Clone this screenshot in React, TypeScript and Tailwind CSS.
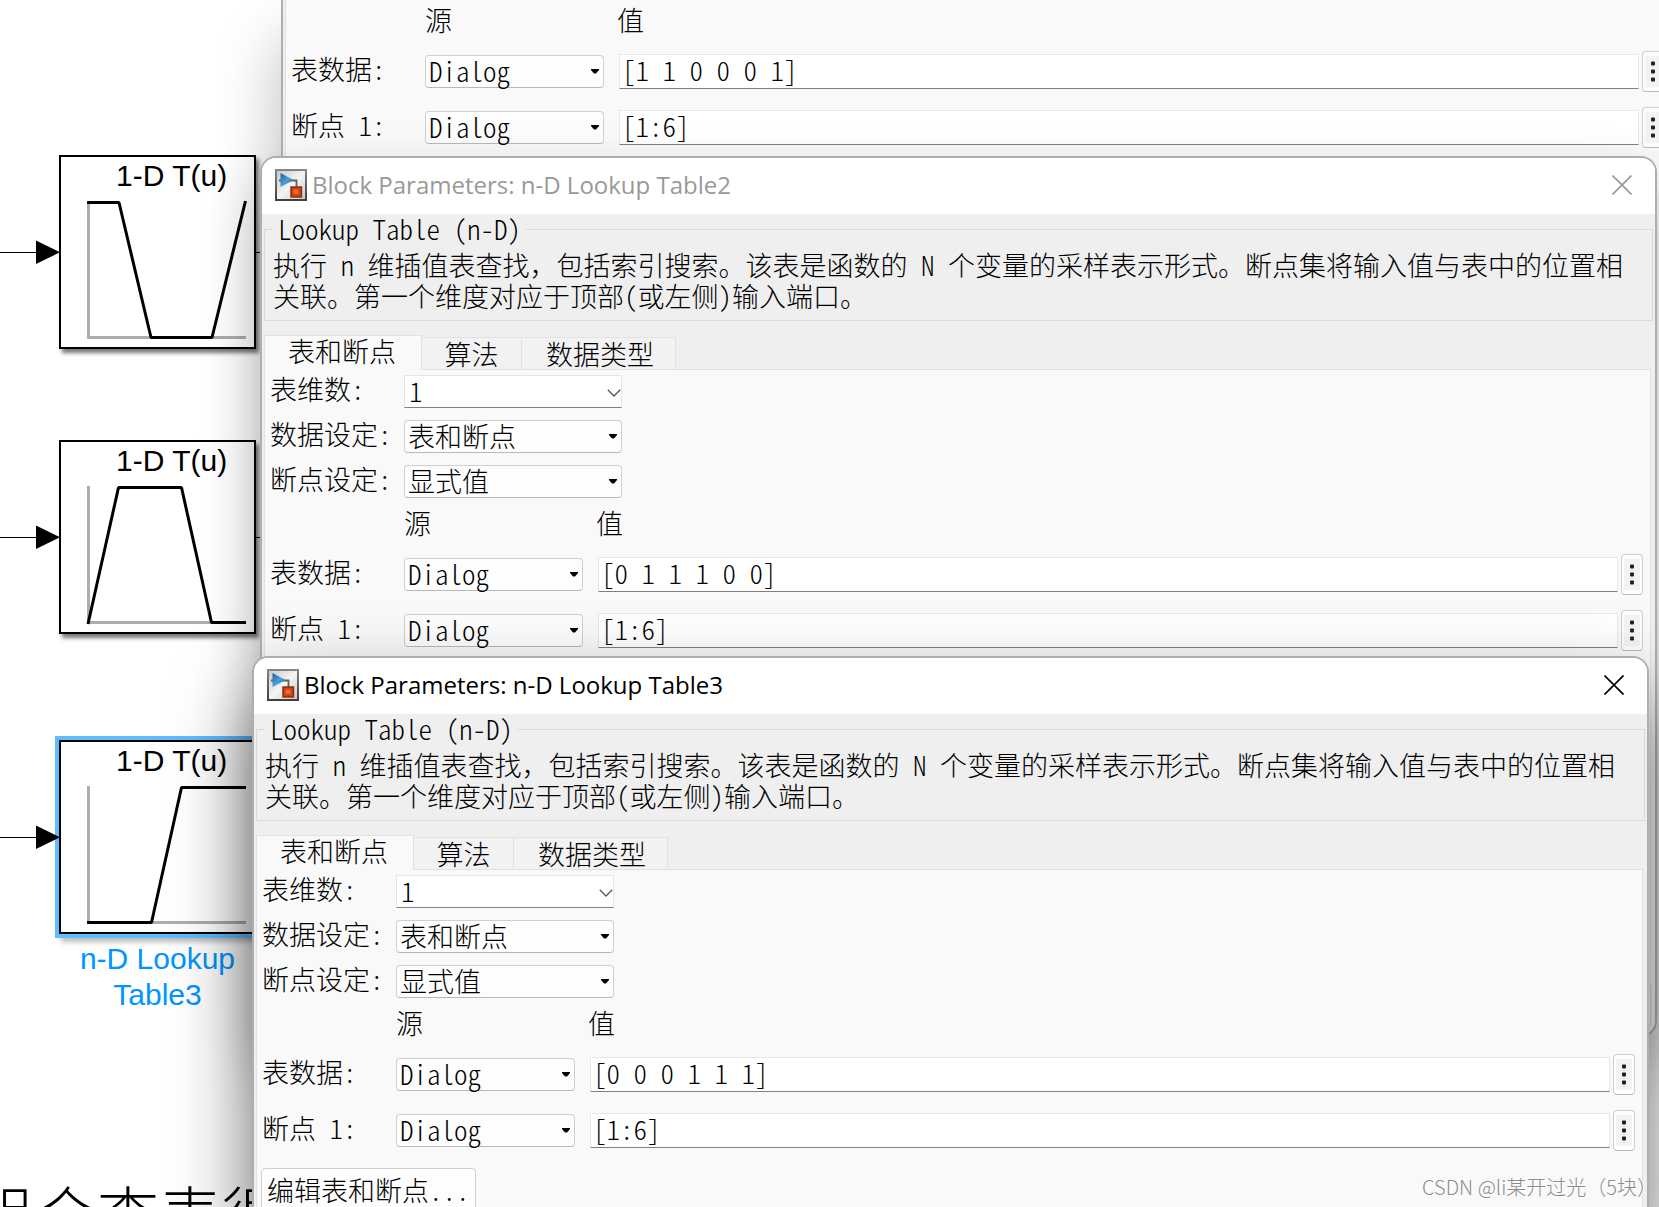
import React, { useId } from "react";

const FORM =
  "font-['Noto_Sans_CJK_SC',sans-serif] text-[27px] font-light [font-feature-settings:'hwid']";

function ModelIcon() {
  return (
    <svg viewBox="0 0 32 32" className="size-8 shrink-0" aria-hidden="true">
      <defs>
        <linearGradient id="iconBg" x1="0" y1="0" x2="1" y2="1">
          <stop offset="0" stopColor="#c4c6c8" />
          <stop offset="0.5" stopColor="#f4f4f4" />
          <stop offset="1" stopColor="#c6c8ca" />
        </linearGradient>
        <linearGradient id="iconEdge" x1="0" y1="0" x2="0" y2="1">
          <stop offset="0" stopColor="#858585" />
          <stop offset="1" stopColor="#3f3f3f" />
        </linearGradient>
        <linearGradient id="iconBlue" x1="0" y1="0" x2="1" y2="1">
          <stop offset="0" stopColor="#1d5f97" />
          <stop offset="0.5" stopColor="#4a9fd6" />
          <stop offset="1" stopColor="#1c669f" />
        </linearGradient>
      </defs>
      <rect x="1" y="1" width="30" height="30" fill="url(#iconBg)" stroke="url(#iconEdge)" strokeWidth="2" />
      <path d="M4 11.5h17.5V19" fill="none" stroke="#5d6266" strokeWidth="1.8" />
      <path d="M5.5 4 18.5 11 5.5 18z" fill="url(#iconBlue)" />
      <rect x="16" y="18" width="10.5" height="10" fill="#cf430f" stroke="#8a2b08" strokeWidth="1.4" />
      <rect x="18.5" y="20.5" width="5" height="4.5" fill="#ee6a34" />
    </svg>
  );
}

function Dropdown({ label, id, value }: { label?: string; id?: string; value: string }) {
  return (
    <div className="relative flex h-[33px] items-center rounded border border-[#d0d0d0] border-b-[#b8b8b8] bg-[#fdfdfd]">
      <select
        id={id}
        aria-label={label}
        className={`${FORM} h-[42px] w-full shrink-0 appearance-none bg-transparent pb-0.5 pl-[3px] text-black outline-none`}
      >
        <option>{value}</option>
      </select>
      <svg viewBox="0 0 8 5" className="pointer-events-none absolute top-[13px] right-1 h-[5px] w-2" aria-hidden="true">
        <path d="M0 0h8v1L5 4.5H3L0 1z" fill="#000" />
      </svg>
    </div>
  );
}

function Combo({ id, value }: { id: string; value: string }) {
  return (
    <div className="relative flex h-[33px] items-center border border-[#e6e6e6] border-b-[#808080] bg-white">
      <select
        id={id}
        className={`${FORM} h-[42px] w-full shrink-0 appearance-none bg-transparent pb-0.5 pl-1 text-black outline-none`}
      >
        <option>{value}</option>
      </select>
      <svg viewBox="0 0 14 8" className="pointer-events-none absolute top-[13px] right-0 h-2 w-[14px]" aria-hidden="true">
        <path d="M0.8 0.8 7 7 13.2 0.8" fill="none" stroke="#555" strokeWidth="1.3" />
      </svg>
    </div>
  );
}

function FieldLabel({ htmlFor, text }: { htmlFor: string; text: string }) {
  return (
    <label htmlFor={htmlFor} className={`${FORM} block pb-1.5 leading-[27px] whitespace-nowrap`}>
      {text}
    </label>
  );
}

function SettingRow({ label, children }: { label: string; children: (id: string) => React.ReactNode }) {
  const id = useId();
  return (
    <div className="grid grid-cols-[134px_218px] items-center">
      <FieldLabel htmlFor={id} text={label} />
      {children(id)}
    </div>
  );
}

function DataRow({ label, value }: { label: string; value: string }) {
  const id = useId();
  return (
    <div className="grid grid-cols-[134px_179px_1fr_22px] items-center">
      <FieldLabel htmlFor={id} text={label} />
      <Dropdown label={label} value="Dialog" />
      <input
        id={id}
        defaultValue={value}
        className={`${FORM} mr-[3px] ml-[15px] h-[35px] min-w-0 border border-[#e8e8e8] border-b-[#808080] bg-white pb-0.5 pl-0.5 text-black outline-none`}
      />
      <button
        type="button"
        aria-label="更多操作"
        className="flex h-[41px] items-center justify-center rounded border border-[#cfcfcf] border-b-[#bbb] bg-[#fdfdfd]"
      >
        <svg viewBox="0 0 16 31" className="h-[31px] w-4" aria-hidden="true">
          <rect width="16" height="31" fill="#f3f3f3" />
          <rect x="6" y="5.5" width="4" height="4" rx="1" fill="#222" />
          <rect x="6" y="13.5" width="4" height="4" rx="1" fill="#222" />
          <rect x="6" y="21.5" width="4" height="4" rx="1" fill="#222" />
        </svg>
      </button>
    </div>
  );
}

function DataTable({ data }: { data: string }) {
  return (
    <div className="flex flex-col gap-[15px]">
      <div className={`${FORM} grid grid-cols-[134px_179px_1fr] pb-1 leading-[25px]`}>
        <span />
        <span>源</span>
        <span className="pl-[13px]">值</span>
      </div>
      <DataRow label="表数据:" value={data} />
      <DataRow label="断点 1:" value="[1:6]" />
    </div>
  );
}

function ParameterDialog({ title, data, active, place }: { title: string; data: string; active: boolean; place: string }) {
  return (
    <section className={`${place} flex flex-col overflow-hidden rounded-2xl border-2 border-[#aeaeae] bg-[#efefef] text-black`}>
      <header className="flex h-14 shrink-0 items-center bg-white pr-[23px] pb-0.5 pl-[13px]">
        <ModelIcon />
        <h2 className={`${active ? "text-black" : "text-[#999]"} flex-1 pl-[5px] font-['Open_Sans','Noto_Sans',sans-serif] text-[24px] leading-8`}>
          {title}
        </h2>
        <button type="button" aria-label="关闭" className={active ? "text-black" : "text-[#999]"}>
          <svg viewBox="0 0 20 20" className="size-5" aria-hidden="true">
            <path d="M0.5 0.5 19.5 19.5M19.5 0.5 0.5 19.5" stroke="currentColor" strokeWidth="1.7" />
          </svg>
        </button>
      </header>

      <fieldset className="mx-0.5 border border-[#dadada] px-2 pt-[5px] pb-[9px]">
        <legend className={`${FORM} px-[5px] leading-[30px]`}>Lookup Table (n-D)</legend>
        <p className={`${FORM} leading-[31px]`}>
          执行 n 维插值表查找<span className="[font-feature-settings:normal]">，</span>
          包括索引搜索。该表是函数的 N 个变量的采样表示形式。断点集将输入值与表中的位置相关联。第一个维度对应于顶部(或左侧)输入端口。
        </p>
      </fieldset>

      <div role="tablist" className={`${FORM} mx-0.5 mt-[14px] flex items-end`}>
        <button role="tab" aria-selected="true" type="button" className="relative z-10 -mb-px h-[35px] w-[158px] border border-b-0 border-[#e2e2e2] bg-[#f9f9f9] pr-0.5 pb-1 leading-[30px]">
          表和断点
        </button>
        <button role="tab" aria-selected="false" type="button" className="h-8 w-[100px] border-t border-r border-[#e2e2e2] bg-[#f2f2f2] leading-[30px]">
          算法
        </button>
        <button role="tab" aria-selected="false" type="button" className="h-8 w-[154px] border-t border-r border-[#e2e2e2] bg-[#f2f2f2] pl-[3px] leading-[30px]">
          数据类型
        </button>
      </div>
      <div
        role="tabpanel"
        className={`${active ? "pb-2" : "pb-[306px]"} mr-1 ml-0.5 border border-[#e2e2e2] bg-[#f9f9f9] pt-[5px] pr-[7px] pl-[5px]`}
      >
        <div className="mb-3 flex flex-col gap-3">
          <SettingRow label="表维数:">{(id) => <Combo id={id} value="1" />}</SettingRow>
          <SettingRow label="数据设定:">{(id) => <Dropdown id={id} value="表和断点" />}</SettingRow>
          <SettingRow label="断点设定:">{(id) => <Dropdown id={id} value="显式值" />}</SettingRow>
        </div>
        <DataTable data={data} />
        {active && (
          <button
            type="button"
            className={`${FORM} mt-[17px] -ml-px h-11 w-[215px] rounded border border-[#cfcfcf] bg-[#fdfdfd] pl-[5px] text-left leading-10 whitespace-nowrap`}
          >
            编辑表和断点...
          </button>
        )}
      </div>
      {!active && (
        <footer className="flex justify-end px-1 pt-6 pb-2">
          <button type="button" aria-label="应用" className="h-[45px] w-28 rounded border border-[#cfcfcf] bg-[#fdfdfd]" />
        </footer>
      )}
    </section>
  );
}

function LookupBlock({ place, curve, selected = false }: { place: string; curve: string; selected?: boolean }) {
  return (
    <div className={`${place} flex items-center`}>
      <svg viewBox="0 0 60 24" className="relative z-10 -mr-px h-6 w-[60px] shrink-0" aria-hidden="true">
        <path d="M0 12.5h40" stroke="#000" strokeWidth="1" />
        <path d="M36 0.5 60 12.3 36 24z" fill="#000" />
      </svg>
      <div
        className={`${selected ? "shadow-[0_0_0_4px_#5fbcff,4px_6px_5px_2px_#0004]" : "shadow-[3px_4px_4px_#0008]"} h-[194px] w-[197px] shrink-0 border-2 border-black bg-white`}
      >
        <h3 className="h-0 pl-[55px] font-['Liberation_Sans',sans-serif] text-[30px] leading-[38px] whitespace-nowrap">1-D T(u)</h3>
        <svg viewBox="2 2 193 190" className="h-[190px] w-[193px]" aria-hidden="true">
          <path d="M29.5 46V182.5H187" fill="none" stroke="#adadad" strokeWidth="3" />
          <path d={curve} fill="none" stroke="#000" strokeWidth="3" strokeLinejoin="bevel" />
        </svg>
      </div>
      <div className="h-px w-5 bg-black" />
    </div>
  );
}

export default function App() {
  return (
    <main className="relative isolate h-screen min-h-[600px] w-full overflow-hidden bg-white text-black">
      <LookupBlock place="absolute left-0 top-[155px] isolate" curve="M28 47.5H60L92 182.5H153L186.5 46" />
      <LookupBlock place="absolute left-0 top-[440px] isolate" curve="M29 184 59.5 47.5H122.5L152.5 182.5H187" />
      <LookupBlock place="absolute left-0 top-[740px] isolate" curve="M28 182.5H92.5L122.5 47.5H187" selected />
      <p className="absolute top-[941px] left-[59px] w-[197px] text-center font-['Liberation_Sans',sans-serif] text-[30px] leading-9 text-[#0095ff]">
        n-D Lookup
        <br />
        Table3
      </p>
      <p className="absolute top-[1181px] -left-[27px] font-['Noto_Sans_CJK_SC',sans-serif] text-[62px] leading-[62px] font-light whitespace-nowrap">
        组合查表很
      </p>

      <section className="absolute top-0 -right-[19px] bottom-0 left-[281px] border-x-2 border-[#aeaeae] bg-[#efefef] shadow-[0_40px_60px_#0004]">
        <div className="mr-1 ml-0.5 h-full border-x border-[#e2e2e2] bg-[#f9f9f9] pt-[7px] pr-[7px] pl-[5px]">
          <DataTable data="[1 1 0 0 0 1]" />
        </div>
      </section>

      <ParameterDialog
        title="Block Parameters: n-D Lookup Table2"
        data="[0 1 1 1 0 0]"
        active={false}
        place="absolute top-[156px] left-[260px] right-0.5 shadow-[0_30px_60px_#0004]"
      />
      <ParameterDialog
        title="Block Parameters: n-D Lookup Table3"
        data="[0 0 0 1 1 1]"
        active
        place="absolute top-[656px] left-[252px] right-2.5 shadow-[0_40px_80px_#0008]"
      />

      <p className="absolute right-0.5 bottom-1.5 font-['Noto_Sans_CJK_SC',sans-serif] text-[20px] leading-7 font-light whitespace-nowrap text-[#8c8c8c] [text-shadow:1px_1px_0_#fff]">
        CSDN @li某开过光（5块）
      </p>
    </main>
  );
}
